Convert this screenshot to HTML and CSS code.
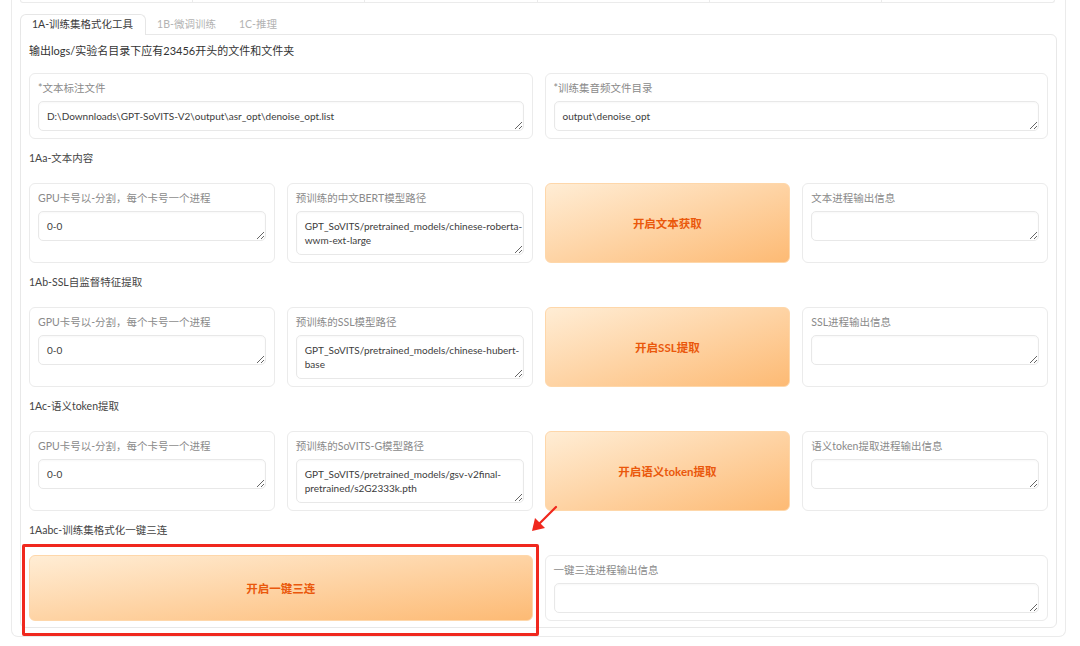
FILE: index.html
```html
<!DOCTYPE html>
<html lang="zh-CN">
<head>
<meta charset="utf-8">
<title>GPT-SoVITS 1A</title>
<link rel="stylesheet" href="styles.css">
</head>
<body>
<div class="outer">
  <div class="topbar">
    <div class="cell"></div><div class="cell"></div><div class="cell"></div>
    <div class="cell"></div><div class="cell"></div><div class="cell"></div>
  </div>
  <div class="tabs">
    <div class="tab active">1A-训练集格式化工具</div>
    <div class="tab">1B-微调训练</div>
    <div class="tab">1C-推理</div>
  </div>
  <div class="panel">
    <div class="note">输出logs/实验名目录下应有23456开头的文件和文件夹</div>

    <div class="row two">
      <div class="card"><div class="label">*文本标注文件</div><div class="ta">D:\Downnloads\GPT-SoVITS-V2\output\asr_opt\denoise_opt.list</div></div>
      <div class="card"><div class="label">*训练集音频文件目录</div><div class="ta">output\denoise_opt</div></div>
    </div>

    <div class="title">1Aa-文本内容</div>
    <div class="row four">
      <div class="card"><div class="label">GPU卡号以-分割，每个卡号一个进程</div><div class="ta">0-0</div></div>
      <div class="card"><div class="label">预训练的中文BERT模型路径</div><div class="ta">GPT_SoVITS/pretrained_models/chinese-roberta-<br>wwm-ext-large</div></div>
      <div class="btn">开启文本获取</div>
      <div class="card"><div class="label">文本进程输出信息</div><div class="ta"></div></div>
    </div>

    <div class="title">1Ab-SSL自监督特征提取</div>
    <div class="row four">
      <div class="card"><div class="label">GPU卡号以-分割，每个卡号一个进程</div><div class="ta">0-0</div></div>
      <div class="card"><div class="label">预训练的SSL模型路径</div><div class="ta">GPT_SoVITS/pretrained_models/chinese-hubert-<br>base</div></div>
      <div class="btn">开启SSL提取</div>
      <div class="card"><div class="label">SSL进程输出信息</div><div class="ta"></div></div>
    </div>

    <div class="title">1Ac-语义token提取</div>
    <div class="row four">
      <div class="card"><div class="label">GPU卡号以-分割，每个卡号一个进程</div><div class="ta">0-0</div></div>
      <div class="card"><div class="label">预训练的SoVITS-G模型路径</div><div class="ta">GPT_SoVITS/pretrained_models/gsv-v2final-<br>pretrained/s2G2333k.pth</div></div>
      <div class="btn">开启语义token提取</div>
      <div class="card"><div class="label">语义token提取进程输出信息</div><div class="ta"></div></div>
    </div>

    <div class="title">1Aabc-训练集格式化一键三连</div>
    <div class="row two">
      <div class="btn">开启一键三连</div>
      <div class="card"><div class="label">一键三连进程输出信息</div><div class="ta"></div></div>
    </div>
  </div>
</div>
<div class="redbox"></div>
<svg class="arrow" width="40" height="40" viewBox="0 0 40 40">
  <line x1="34" y1="4" x2="16" y2="22" stroke="#f0281e" stroke-width="2.2" stroke-linecap="round"/>
  <polygon points="10,28 13,15 23,25" fill="#f0281e"/>
</svg>
</body>
</html>
```

FILE: styles.css
```css
* { box-sizing: border-box; }
html, body { margin: 0; padding: 0; background: #fff; }
body {
  font-family: "Lato", "Noto Sans CJK SC", sans-serif;
  color: #444;
  position: relative;
  width: 1080px;
  height: 646px;
  overflow: hidden;
}
.outer {
  margin: 0 14px 0 11px;
  padding: 0 8px 8px 8px;
  border: 1px solid #ebebeb;
  border-top: none;
  border-radius: 0 0 7px 7px;
}
.topbar {
  display: grid;
  grid-template-columns: repeat(6, minmax(0, 1fr));
  height: 3px;
  margin-right: 2px;
  border: 1px solid #ebebeb;
  border-top: none;
  border-radius: 0 0 6px 6px;
}
.topbar .cell { border-right: 1px solid #ebebeb; }
.topbar .cell:last-child { border-right: none; }
.tabs {
  display: flex;
  margin-top: 11px;
  height: 20px;
  position: relative;
  z-index: 1;
}
.tab {
  font-size: 10.5px;
  line-height: 20px;
  padding: 0 12px 0 11px;
  color: #b3b3b3;
}
.tab.active {
  color: #3a3a3a;
  background: #fff;
  border: 1px solid #e6e6e6;
  border-bottom: none;
  border-radius: 6px 6px 0 0;
  height: 21px;
  line-height: 19px;
}
.panel {
  border: 1px solid #e8e8e8;
  border-radius: 0 6px 6px 6px;
  padding: 9px 8px 6px 8px;
}
.note {
  font-size: 11px;
  line-height: 14px;
  color: #333;
  margin-bottom: 15px;
}
.title {
  font-size: 10.5px;
  line-height: 14px;
  color: #444;
  margin: 12px 0 18px;
}
.row { display: grid; gap: 12px; }
.row.two { grid-template-columns: repeat(2, minmax(0, 1fr)); }
.row.four { grid-template-columns: repeat(4, minmax(0, 1fr)); }
.card {
  border: 1px solid #ebebeb;
  border-radius: 6px;
  padding: 7px 8px 7px 8px;
  background: #fff;
  min-width: 0;
}
.label {
  font-size: 10.5px;
  line-height: 14px;
  color: #8a8a8a;
  white-space: nowrap;
}
.ta {
  margin-top: 6px;
  border: 1px solid #e8e8e8;
  border-radius: 5px;
  padding: 7px 8px;
  min-height: 30px;
  font-size: 10px;
  line-height: 14px;
  color: #3c3c3c;
  white-space: nowrap;
  resize: vertical;
  overflow: hidden;
  box-shadow: inset 0 1px 2px rgba(0,0,0,0.03);
}
.btn {
  display: flex;
  align-items: center;
  justify-content: center;
  border: 1px solid #fed7aa;
  border-radius: 6px;
  background: linear-gradient(to bottom right, #ffedd5, #fdba74);
  color: #ea580c;
  font-size: 11.5px;
  font-weight: 700;
  min-width: 0;
}
.redbox {
  position: absolute;
  left: 22px;
  top: 544px;
  width: 517px;
  height: 92px;
  border: 3px solid #f0281e;
  border-radius: 2px;
}
.arrow {
  position: absolute;
  left: 522px;
  top: 503px;
}
```
